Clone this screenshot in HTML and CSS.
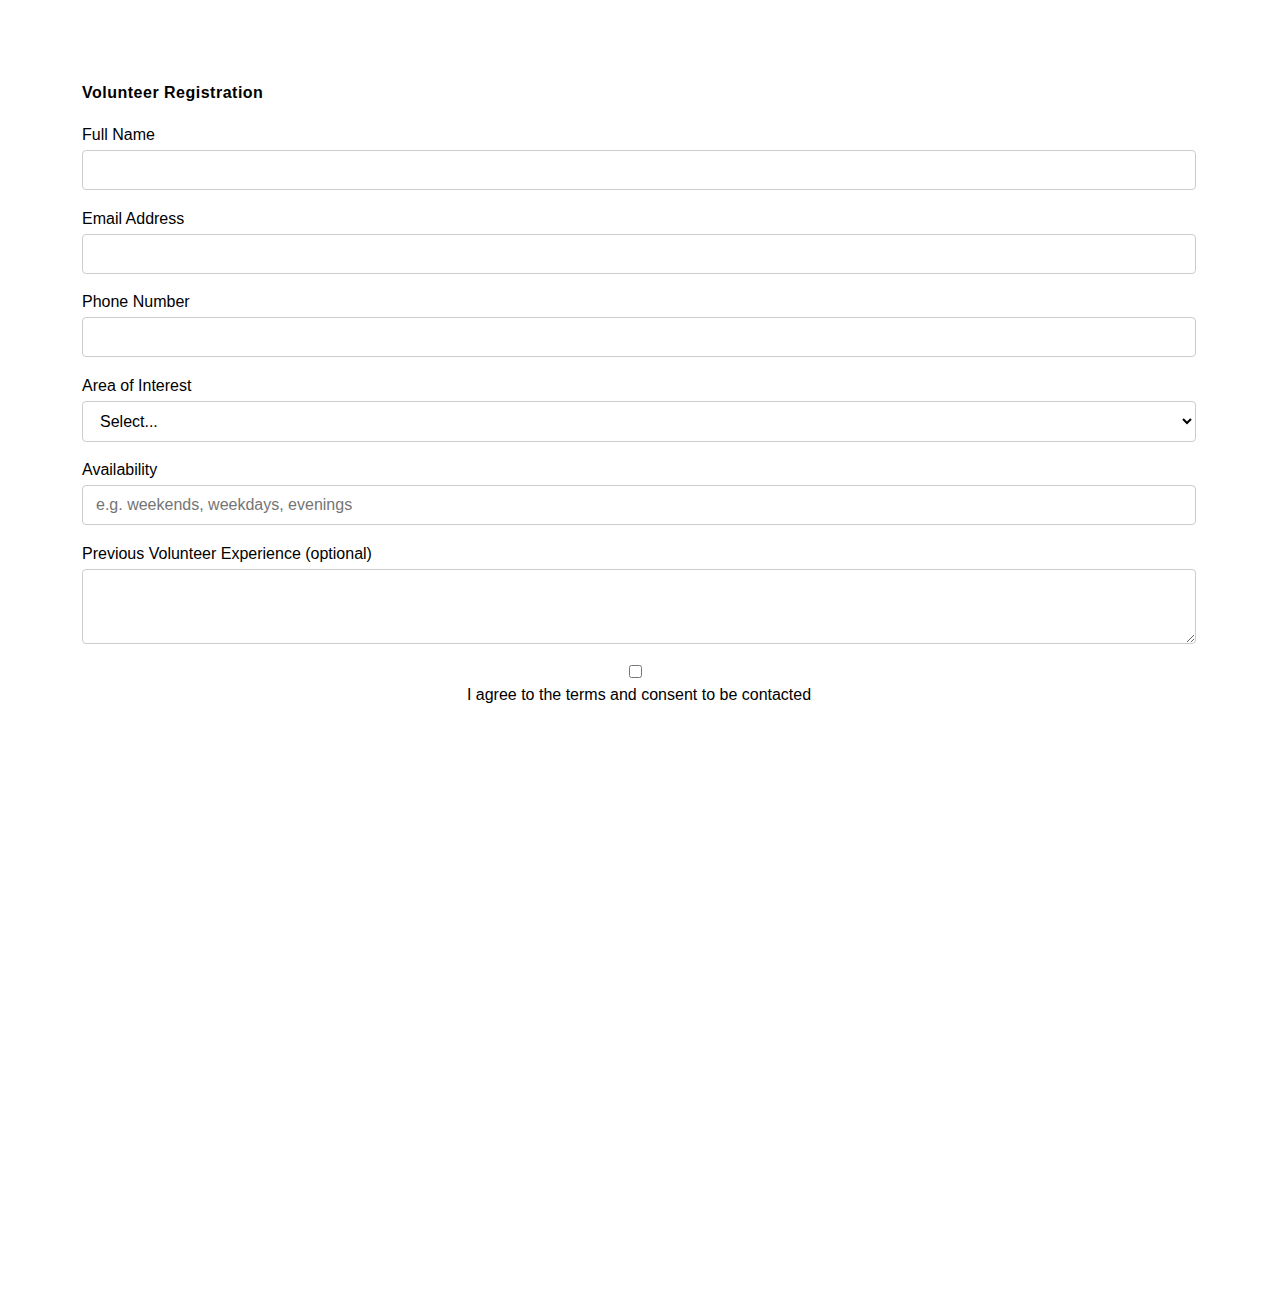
FILE: index.html
```html
<!DOCTYPE html>
<html>
<head>
	<title>Volunteer Registration</title>
	<link rel="stylesheet" href="styles.css">
</head>
<body>
	<form class="regForm">
		<h2 class="formTitle">Volunteer Registration</h2>

		<div class="field">
			<label for="fullName">Full Name</label>
			<input type="text" id="fullName">
		</div>
		<div class="field">
			<label for="email">Email Address</label>
			<input type="email" id="email">
		</div>
		<div class="field">
			<label for="phone">Phone Number</label>
			<input type="tel" id="phone">
		</div>
		<div class="field">
			<label for="area">Area of Interest</label>
			<select id="area">
				<option>Select...</option>
				<option>Events</option>
				<option>Fundraising</option>
				<option>Outreach</option>
			</select>
		</div>
		<div class="field">
			<label for="avail">Availability</label>
			<input type="text" id="avail" placeholder="e.g. weekends, weekdays, evenings">
		</div>
		<div class="field">
			<label for="exp">Previous Volunteer Experience (optional)</label>
			<textarea id="exp"></textarea>
		</div>

		<div class="agree">
			<input type="checkbox" id="terms">
			<label for="terms">I agree to the terms and consent to be contacted</label>
		</div>
	</form>
</body>
</html>
```

FILE: styles.css
```css
body{
	margin: 0;
	font-family: "Liberation Sans", Arial, sans-serif;
	font-size: 16px;
	color: #000;
	background: #fff;
}
.regForm{
	padding: 84px 82px 82px;
}
.formTitle{
	font-size: 16px;
	font-weight: bold;
	letter-spacing: 0.5px;
	margin: 0 0 24px;
}
.field{
	margin-bottom: 19.6px;
}
.field label{
	display: block;
	margin-bottom: 6px;
}
.field input,
.field select,
.field textarea{
	display: block;
	width: 100%;
	box-sizing: border-box;
	padding: 10px 13px;
	border: 1px solid #ccc;
	border-radius: 4px;
	font-family: inherit;
	font-size: 16px;
	background: #fff;
	color: #000;
}
.field textarea{
	height: 75px;
}
.agree{
	text-align: center;
}
.agree input{
	margin: 0 8px 0 0;
}
.agree label{
	display: block;
	margin-top: 4px;
}
```
